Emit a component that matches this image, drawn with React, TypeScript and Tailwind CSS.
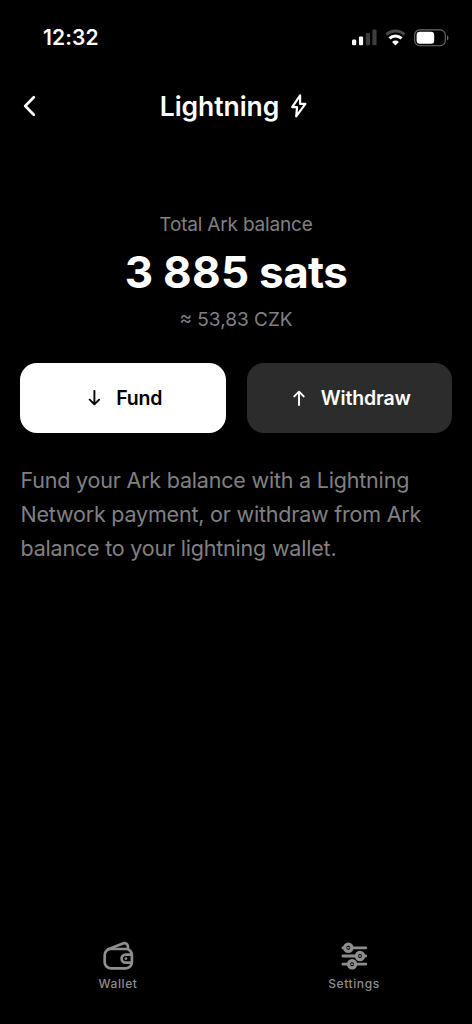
import React from "react";

function SignalIcon() {
  return (
    <svg width="25" height="17" viewBox="0 0 25 17">
      <rect x="0" y="10.6" width="4.2" height="5.6" rx="1.2" fill="#fff" />
      <rect x="6.9" y="7.6" width="4.2" height="8.6" rx="1.2" fill="#fff" />
      <rect x="13.8" y="4" width="4.2" height="12.2" rx="1.2" fill="#3c3c3e" />
      <rect x="20.4" y="0.6" width="4.2" height="15.6" rx="1.2" fill="#3c3c3e" />
    </svg>
  );
}

function WifiIcon() {
  return (
    <svg width="21" height="17" viewBox="0 0 21 17" fill="none">
      <path d="M1.4 5.6a13.2 13.2 0 0 1 18.2 0" stroke="#48484a" strokeWidth="3" />
      <path d="M4.5 9.4a8.6 8.6 0 0 1 12 0" stroke="#fff" strokeWidth="3" />
      <path d="M10.5 16.4 7.1 12.9a4.8 4.8 0 0 1 6.8 0z" fill="#fff" />
    </svg>
  );
}

function BatteryIcon() {
  return (
    <svg width="36" height="18" viewBox="0 0 36 18" fill="none">
      <rect x="0.7" y="0.9" width="30.6" height="15.8" rx="5" stroke="#6c6c6e" strokeWidth="1.1" />
      <rect x="2.6" y="2.8" width="17.6" height="12" rx="3.2" fill="#fff" />
      <path d="M33 6.2c1.9.8 1.9 4.4 0 5.2z" fill="#6c6c6e" />
    </svg>
  );
}

function BackIcon() {
  return (
    <svg width="14" height="22" viewBox="0 0 14 22" fill="none" stroke="#fff" strokeWidth="2.7" strokeLinecap="round" strokeLinejoin="round">
      <path d="M11.8 2.2 3.2 11l8.6 8.800" />
    </svg>
  );
}

function BoltIcon() {
  return (
    <svg width="18" height="26" viewBox="0 0 18 26" fill="none" stroke="#fff" strokeWidth="2.2" strokeLinejoin="round">
      <path d="M10.1 2.3 2.2 14.2h4.9l-.9 9.100L15.400 10.900h-5.300z" />
    </svg>
  );
}

function ArrowDown() {
  return (
    <svg width="12" height="16" viewBox="0 0 12 16" fill="none" stroke="#000" strokeWidth="1.9" strokeLinecap="round" strokeLinejoin="round">
      <path d="M6.400 .9v13.400M1.700 9.700 6.400 14.400l4.700-4.700" />
    </svg>
  );
}

function ArrowUp() {
  return (
    <svg width="12" height="16" viewBox="0 0 12 16" fill="none" stroke="#fff" strokeWidth="1.9" strokeLinecap="round" strokeLinejoin="round">
      <path d="M6 15.100V1.800M1.300 6.400 6 1.700l4.700 4.700" />
    </svg>
  );
}

function WalletIcon() {
  return (
    <svg width="32" height="32" viewBox="0 0 32 32" fill="none" stroke="#8e8e8e" strokeWidth="2.7" strokeLinejoin="round" strokeLinecap="round">
      <rect x="2.7" y="9" width="27.2" height="19.3" rx="6" />
      <path d="M6 9.300 20.900 3.400c2.600-.9 4.800.400 5 2.900l.1 2.500" />
      <path d="M29.5 14.600h-5.900a4 4 0 0 0 0 8h5.900" />
      <circle cx="23.9" cy="18.600" r="1.400" fill="#8e8e8e" stroke="none" />
    </svg>
  );
}

function SlidersIcon() {
  return (
    <svg width="28" height="28" viewBox="0 0 28 28" fill="none" stroke="#8e8e8e" strokeWidth="2.8" strokeLinecap="round">
      <path d="M2.9 5.800h1.500M12.200 5.800h13.600M2.900 14h13.200M24 14h1.800M2.900 22.200h5.300M16 22.200h9.800" />
      <g strokeWidth="3.300">
        <circle cx="8.300" cy="5.800" r="3.600" />
        <circle cx="20" cy="14" r="3.600" />
        <circle cx="12.100" cy="22.200" r="3.600" />
      </g>
      <path strokeWidth="1.400" d="M7.600 5.800h1.400M19.300 14h1.400M11.400 22.200h1.400" />
    </svg>
  );
}

export default function App() {
  return (
    <div className="flex h-[1024px] w-[472px] flex-col overflow-hidden bg-black font-['Inter',sans-serif] text-white">
      <div className="flex h-[75px] items-center justify-between pr-[22px] pl-[43px]">
        <span className="pt-px text-[21px] leading-7 font-semibold tracking-[0.1px] whitespace-nowrap">12:32</span>
        <div className="flex items-center gap-2">
          <SignalIcon />
          <WifiIcon />
          <BatteryIcon />
        </div>
      </div>

      <header className="grid h-[62px] grid-cols-[60px_1fr_60px] items-center">
        <button className="pl-[22px]" aria-label="Back"><BackIcon /></button>
        <div className="flex items-center justify-center gap-[11px] pr-1">
          <h1 className="text-[26.5px] leading-8 font-semibold tracking-[-0.05px] whitespace-nowrap">Lightning</h1>
          <BoltIcon />
        </div>
      </header>

      <section className="mt-[74px] flex flex-col items-center whitespace-nowrap">
        <p className="text-[19px] leading-7 tracking-[-0.18px] text-[#808082]">Total Ark balance</p>
        <p className="mt-1.5 text-[44px] leading-[54px] font-bold">
          <span className="tracking-[0.3px] [word-spacing:-1px]">3 885 </span>
          <span className="tracking-[-0.6px]">sats</span>
        </p>
        <p className="mt-[7px] text-[19px] leading-7 text-[#808082]">≈ 53,83 CZK</p>
      </section>

      <div className="mt-[29px] grid grid-cols-2 gap-[21px] px-5">
        <button className="flex h-[69.5px] items-center justify-center gap-4 rounded-[17px] bg-white pt-px pl-[5px] text-[19.5px] font-semibold tracking-[-0.15px] text-black">
          <ArrowDown />
          <span>Fund</span>
        </button>
        <button className="flex h-[69.5px] items-center justify-center gap-4 rounded-[17px] bg-[#2c2c2c] pt-px pl-[5px] text-[19.5px] font-semibold tracking-[-0.15px]">
          <ArrowUp />
          <span>Withdraw</span>
        </button>
      </div>

      <p className="mt-[30px] pl-[20.5px] text-[21.5px] leading-[34px] tracking-[-0.2px] whitespace-nowrap text-[#808082]">
        Fund your Ark balance with a Lightning<br />
        Network payment, or withdraw from Ark<br />
        balance to your lightning wallet.
      </p>

      <nav className="mt-auto grid h-[84px] grid-cols-2 text-[12px] leading-4 font-medium tracking-[0.6px] text-[#8e8e8e]">
        <button className="flex flex-col items-center">
          <WalletIcon />
          <span className="mt-1">Wallet</span>
        </button>
        <button className="flex flex-col items-center pt-0.5">
          <SlidersIcon />
          <span className="mt-1.5">Settings</span>
        </button>
      </nav>
    </div>
  );
}
